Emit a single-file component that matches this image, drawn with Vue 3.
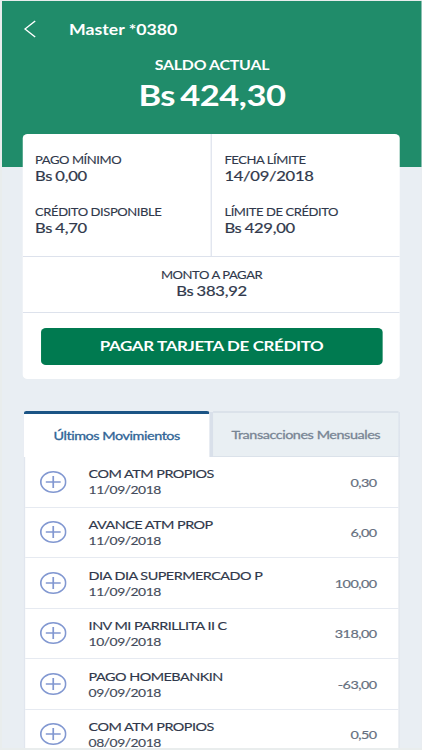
<template>
  <div class="viewport">
    <div class="screen">
      <header class="header">
        <div class="nav">
          <svg class="back" width="10" height="18" viewBox="0 0 10 18">
            <path d="M9.2 1 L0.8 9 L9.2 17" />
          </svg>
          <h1>Master *0380</h1>
        </div>
        <p class="balance-label">SALDO ACTUAL</p>
        <p class="balance">Bs 424,30</p>
      </header>

      <section class="card">
        <div class="details">
          <div class="column" v-for="(column, i) in details" :key="i">
            <div class="detail" v-for="detail in column" :key="detail.label">
              <p class="label">{{ detail.label }}</p>
              <p class="value">{{ detail.value }}</p>
            </div>
          </div>
        </div>
        <div class="amount">
          <p class="label">MONTO A PAGAR</p>
          <p class="value">Bs 383,92</p>
        </div>
        <div class="action">
          <button class="pay">PAGAR TARJETA DE CRÉDITO</button>
        </div>
      </section>

      <section class="movements">
        <div class="tabs">
          <button :class="['tab', tab === 1 ? 'active' : '']" @click="tab = 1">
            Últimos Movimientos
          </button>
          <button :class="['tab', tab === 2 ? 'active' : '']" @click="tab = 2">
            Transacciones Mensuales
          </button>
        </div>
        <ul class="list">
          <li class="row" v-for="(item, i) in items" :key="i">
            <svg class="plus" width="22" height="22" viewBox="0 0 22 22">
              <circle cx="11" cy="11" r="10.2" />
              <path d="M11 4.9 V17.1 M4.9 11 H17.1" />
            </svg>
            <div class="info">
              <p class="name">{{ item.name }}</p>
              <p class="date">{{ item.date }}</p>
            </div>
            <span class="price">{{ item.price }}</span>
          </li>
        </ul>
      </section>
    </div>
  </div>
</template>

<script setup>
import { ref } from "vue";

const tab = ref(1);

const details = [
  [
    { label: "PAGO MÍNIMO", value: "Bs 0,00" },
    { label: "CRÉDITO DISPONIBLE", value: "Bs 4,70" },
  ],
  [
    { label: "FECHA LÍMITE", value: "14/09/2018" },
    { label: "LÍMITE DE CRÉDITO", value: "Bs 429,00" },
  ],
];

const items = [
  { name: "COM ATM PROPIOS", date: "11/09/2018", price: "0,30" },
  { name: "AVANCE ATM PROP", date: "11/09/2018", price: "6,00" },
  { name: "DIA DIA SUPERMERCADO P", date: "11/09/2018", price: "100,00" },
  { name: "INV MI PARRILLITA II C", date: "10/09/2018", price: "318,00" },
  { name: "PAGO HOMEBANKIN", date: "09/09/2018", price: "-63,00" },
  { name: "COM ATM PROPIOS", date: "08/09/2018", price: "0,50" },
];
</script>

<style>
body {
  margin: 0;
  overflow: hidden;
}
</style>

<style scoped>
* {
  margin: 0;
  padding: 0;
  box-sizing: border-box;
}

.viewport {
  width: 422px;
  height: 750px;
  padding: 1px 0 2px 2px;
  overflow: hidden;
  background: #e9eded;
}

/* The screen is laid out 344px wide and widened to fill the viewport */
.screen {
  width: 344.26px;
  height: 747px;
  overflow: hidden;
  transform: scaleX(1.22);
  transform-origin: 0 0;
  background: #e9eef3;
  color: #30384b;
  font-family: Lato, sans-serif;
}

.header {
  height: 166px;
  background: #208c6a;
  color: #fff;
}

.nav {
  display: flex;
  align-items: center;
  height: 56px;
  padding-left: 18px;
}

.back {
  fill: none;
  stroke: #fff;
  stroke-width: 1.1;
}

h1 {
  margin: 1px 0 0 27px;
  font-size: 14.5px;
  line-height: 18px;
  font-weight: 700;
}

.balance-label {
  font-size: 13px;
  line-height: 16px;
  font-weight: 700;
  letter-spacing: -0.16px;
  word-spacing: -0.4px;
  text-align: center;
}

.balance {
  margin-top: 4px;
  font-size: 28.3px;
  line-height: 37px;
  font-weight: 700;
  letter-spacing: -0.42px;
  word-spacing: -2px;
  text-align: center;
}

.card {
  width: 309.4px;
  height: 245px;
  margin: -33px 0 0 17.1px;
  border-radius: 4px;
  background: #fff;
  overflow: hidden;
}

.details {
  display: flex;
  height: 123px;
  border-bottom: 1px solid #dde2ec;
}

.column {
  flex: 1;
  padding: 18px 0 0 10px;
}

.column + .column {
  border-left: 1px solid #dde2ec;
}

.detail {
  height: 52px;
}

.label {
  font-size: 10.7px;
  line-height: 15px;
  letter-spacing: -0.36px;
  -webkit-text-stroke: 0.1px currentColor;
}

.value {
  font-size: 13.6px;
  line-height: 18px;
  letter-spacing: -0.22px;
  word-spacing: -0.6px;
  -webkit-text-stroke: 0.2px currentColor;
}

.amount {
  height: 56px;
  padding-top: 10px;
  border-bottom: 1px solid #dde2ec;
  text-align: center;
}

.action {
  padding: 15px 14.7px 0;
}

.pay {
  display: block;
  width: 100%;
  height: 37px;
  padding-bottom: 2px;
  border: 0;
  border-radius: 4px;
  background: #007a50;
  color: #fff;
  font: 700 13.9px Lato, sans-serif;
  letter-spacing: -0.3px;
}

.movements {
  width: 308px;
  margin: 32px 0 0 18px;
}

.tabs {
  display: flex;
  height: 46px;
  background: linear-gradient(#e9eef3 1px, #d9e0ea 1px);
}

.tab {
  width: 152px;
  border: 0;
  border-top: 2px solid #dbe2ea;
  border-bottom: 1px solid #dbe2ea;
  background: #e9eff3;
  color: #788594;
  font: 400 11.8px Lato, sans-serif;
  letter-spacing: -0.36px;
  white-space: nowrap;
  -webkit-text-stroke: 0.3px currentColor;
}

.tab + .tab {
  width: 152px;
  margin-left: 3px;
}

.tab.active {
  border-top: 3px solid #1b5485;
  border-bottom: 0;
  border-radius: 2px 2px 0 0;
  background: #fff;
  color: #2f6496;
}

.list {
  list-style: none;
  border-right: 1px solid #dbe2ea;
  border-left: 1px solid #e1e6ee;
  background: #fff;
}

.row {
  display: flex;
  height: 50.6px;
  padding: 0 18px 0 12px;
  border-bottom: 1px solid #e6eaf1;
}

.plus {
  margin-top: 13.5px;
  fill: none;
  stroke: #8298d1;
  stroke-width: 1.4;
}

.info {
  flex: 1;
  margin: 9.4px 0 0 18px;
}

.name {
  font-size: 11.8px;
  line-height: 16px;
  letter-spacing: -0.42px;
  white-space: nowrap;
  -webkit-text-stroke: 0.15px currentColor;
}

.date {
  margin-top: 1px;
  color: #444b5b;
  font-size: 11.4px;
  line-height: 14px;
  letter-spacing: -0.4px;
  -webkit-text-stroke: 0.15px currentColor;
}

.price {
  padding-top: 17.5px;
  color: #667080;
  font-size: 11.8px;
  line-height: 16px;
  letter-spacing: -0.45px;
  -webkit-text-stroke: 0.2px currentColor;
}
</style>
